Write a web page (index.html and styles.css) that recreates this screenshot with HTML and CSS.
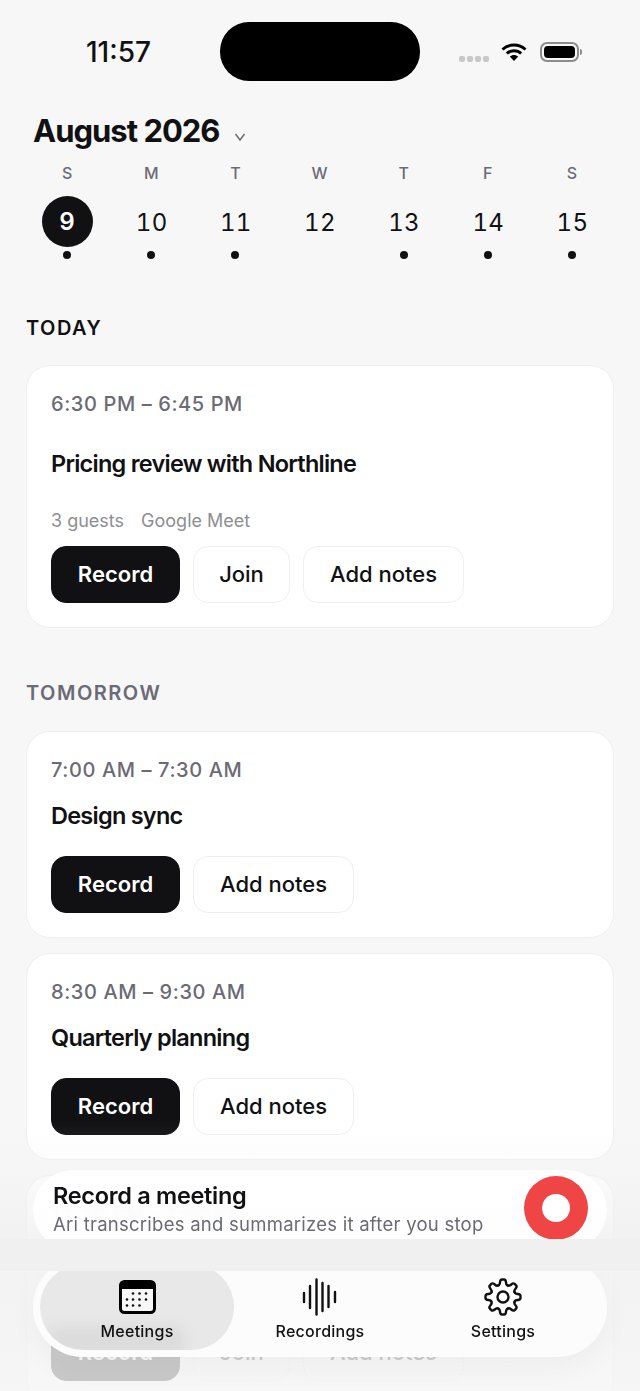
FILE: index.html
```html
<!DOCTYPE html>
<html>
<head>
    <meta charset="utf-8">
    <title>Meetings</title>
    <link rel="stylesheet" href="styles.css">
</head>
<body>
<div class="status">
    <div class="clock">11:57</div>
    <div class="island"></div>
    <div class="status-icons">
        <div class="signal"><span></span><span></span><span></span><span></span></div>
        <svg class="wifi" width="28" height="20" viewBox="0 0 28 20">
            <path d="M2.500 7.500C9 1.500 19 1.500 25.500 7.500" fill="none" stroke="#000" stroke-width="3"/>
            <path d="M6.800 11.500C11 7.700 17 7.700 21.200 11.500" fill="none" stroke="#000" stroke-width="3"/>
            <path d="M9.800 14.600L14 19L18.200 14.600C15.800 12.400 12.200 12.400 9.800 14.600Z" fill="#000"/>
        </svg>
        <div class="battery"><div class="battery-fill"></div></div>
        <div class="battery-tip"></div>
    </div>
</div>

<div class="month">
    <h1>August 2026</h1>
    <svg class="chevron" width="12" height="10" viewBox="0 0 12 10"><path d="M1.500 2L6 8L10.500 2" fill="none" stroke="#6b6b76" stroke-width="1.500"/></svg>
</div>

<div class="week">
    <div class="day"><span class="letter">S</span><span class="num selected">9</span><span class="dot"></span></div>
    <div class="day"><span class="letter">M</span><span class="num">10</span><span class="dot"></span></div>
    <div class="day"><span class="letter">T</span><span class="num">11</span><span class="dot"></span></div>
    <div class="day"><span class="letter">W</span><span class="num">12</span><span class="dot none"></span></div>
    <div class="day"><span class="letter">T</span><span class="num">13</span><span class="dot"></span></div>
    <div class="day"><span class="letter">F</span><span class="num">14</span><span class="dot"></span></div>
    <div class="day"><span class="letter">S</span><span class="num">15</span><span class="dot"></span></div>
</div>

<div class="section today">TODAY</div>
<div class="card first">
    <div class="time">6:30 PM – 6:45 PM</div>
    <div class="title spaced">Pricing review with Northline</div>
    <div class="meta"><span>3 guests</span><span>Google Meet</span></div>
    <div class="actions">
        <div class="btn primary">Record</div>
        <div class="btn join">Join</div>
        <div class="btn notes">Add notes</div>
    </div>
</div>

<div class="section tomorrow">TOMORROW</div>
<div class="card">
    <div class="time">7:00 AM – 7:30 AM</div>
    <div class="title">Design sync</div>
    <div class="actions tall">
        <div class="btn primary">Record</div>
        <div class="btn notes">Add notes</div>
    </div>
</div>
<div class="card">
    <div class="time">8:30 AM – 9:30 AM</div>
    <div class="title">Quarterly planning</div>
    <div class="actions tall">
        <div class="btn primary">Record</div>
        <div class="btn notes">Add notes</div>
    </div>
</div>
<div class="card last">
    <div class="time">12:30 PM – 1:00 PM</div>
    <div class="covered"></div>
    <div class="actions flush">
        <div class="btn primary">Record</div>
        <div class="btn join">Join</div>
        <div class="btn notes">Add notes</div>
    </div>
</div>

<div class="scrim"></div>
<div class="record-bar">
    <div class="record-text">
        <div class="record-title">Record a meeting</div>
        <div class="record-sub">Ari transcribes and summarizes it after you stop</div>
    </div>
    <div class="record-btn"><div class="record-hole"></div></div>
</div>
<div class="tabs">
    <div class="tab active">
        <div class="tab-icon">
            <svg width="37" height="34" viewBox="0 0 37 34">
                <rect x="1.500" y="1.500" width="34" height="31" rx="4" fill="#f7f7f7" stroke="#000" stroke-width="3"/>
                <path d="M1.500 5.500A4 4 0 0 1 5.500 1.500h26A4 4 0 0 1 35.500 5.500V8.500H1.500Z" fill="#000" stroke="#000"/>
                <g fill="#111">
                    <circle cx="14" cy="13.500" r="1.300"/><circle cx="20.500" cy="13.500" r="1.300"/><circle cx="27" cy="13.500" r="1.300"/>
                    <circle cx="8" cy="19.500" r="1.300"/><circle cx="14" cy="19.500" r="1.300"/><circle cx="20.500" cy="19.500" r="1.300"/><circle cx="27" cy="19.500" r="1.300"/>
                    <circle cx="8" cy="25.500" r="1.300"/><circle cx="14" cy="25.500" r="1.300"/><circle cx="20.500" cy="25.500" r="1.300"/>
                </g>
            </svg>
        </div>
        <span>Meetings</span>
    </div>
    <div class="tab">
        <div class="tab-icon">
            <svg width="36" height="38" viewBox="0 0 36 38" fill="none" stroke="#111" stroke-width="2.400" stroke-linecap="round">
                <path d="M2 15V24M8 8V30M14.500 1.500V36.500M20.500 5V33M26.500 8V29M33 14V24"/>
            </svg>
        </div>
        <span>Recordings</span>
    </div>
    <div class="tab">
        <div class="tab-icon">
            <svg width="40" height="40" viewBox="0 0 40 40" fill="none" stroke="#111" stroke-width="2.400" stroke-linecap="round">
                <defs>
                    <path id="cog" d="M15.200 8.450C16.600 8 16.900 7 17 5.300Q17.200 2.500 19 2.500H21Q22.800 2.500 23 5.300C23.100 7 23.400 8 24.800 8.450"/>
                </defs>
                <circle cx="20" cy="20" r="5.500"/>
                <use href="#cog"/>
                <use href="#cog" transform="rotate(45 20 20)"/>
                <use href="#cog" transform="rotate(90 20 20)"/>
                <use href="#cog" transform="rotate(135 20 20)"/>
                <use href="#cog" transform="rotate(180 20 20)"/>
                <use href="#cog" transform="rotate(225 20 20)"/>
                <use href="#cog" transform="rotate(270 20 20)"/>
                <use href="#cog" transform="rotate(315 20 20)"/>
            </svg>
        </div>
        <span>Settings</span>
    </div>
</div>
<div class="band"></div>
</body>
</html>
```

FILE: styles.css
```css
* { box-sizing: border-box; }
html, body { margin: 0; padding: 0; }
body {
    width: 640px;
    height: 1391px;
    position: relative;
    overflow: hidden;
    background: #f7f7f7;
    color: #111113;
    font-family: Inter, "Liberation Sans", sans-serif;
}

/* status bar */
.status { display: flex; align-items: center; height: 59px; margin-top: 22px; padding-left: 86px; }
.clock { width: 134px; font-size: 28px; font-weight: 500; color: #111; }
.island { width: 200px; height: 59px; border-radius: 29px; background: #000; }
.status-icons { display: flex; align-items: center; margin-left: 39px; }
.signal { display: flex; gap: 2px; margin-top: 14px; margin-right: 11px; }
.signal span { width: 6px; height: 6px; border-radius: 2px; background: #c8c8c8; }
.wifi { margin-right: 12px; }
.battery { width: 39px; height: 20px; border: 2px solid #8c8c8c; border-radius: 7px; padding: 2px; }
.battery-fill { height: 100%; border-radius: 4px; background: #000; }
.battery-tip { width: 2px; height: 6px; margin-left: 1px; border-radius: 0 2px 2px 0; background: #8c8c8c; }

/* month + week */
.month { display: flex; align-items: center; margin: 31px 0 0 33px; height: 36px; }
.month h1 { margin: 0; font-size: 31px; font-weight: 700; letter-spacing: -1px; color: #111113; }
.chevron { margin: 14px 0 0 15px; }
.week { display: flex; padding: 0 26px 0 25px; margin-top: 14px; }
.day { width: 84.2px; display: flex; flex-direction: column; align-items: center; }
.letter { height: 22px; line-height: 22px; font-size: 16px; font-weight: 500; color: #6b6b76; }
.num { width: 51px; height: 51px; margin-top: 12px; line-height: 53px; text-align: center; text-indent: 1px; border-radius: 50%; font-size: 24px; font-weight: 400; letter-spacing: 0.300px; font-variant-numeric: tabular-nums; color: #111113; }
.num.selected { background: #111113; color: #fff; font-weight: 600; line-height: 51px; text-indent: 0; }
.dot { width: 8px; height: 8px; margin-top: 4px; border-radius: 50%; background: #111113; }
.dot.none { background: none; }

/* agenda */
.section { margin-left: 26px; font-size: 20px; font-weight: 600; letter-spacing: 1.500px; line-height: 24px; }
.today { margin-top: 57px; color: #111113; }
.tomorrow { margin-top: 53px; color: #6b6b76; }
.card {
    margin: 15px 26px 0;
    height: 207px;
    padding: 25px 24px 0;
    background: #fff;
    border: 1px solid #efefef;
    border-radius: 24px;
}
.card.first { height: 263px; }
.card.last { height: 231px; }
.today + .card { margin-top: 25px; }
.tomorrow + .card { margin-top: 26px; }
.time { font-size: 20px; font-weight: 500; line-height: 26px; letter-spacing: 0.600px; color: #6b6b76; }
.title { margin-top: 19px; font-size: 23.500px; font-weight: 600; line-height: 28px; letter-spacing: -0.750px; color: #111113; }
.title.spaced { margin-top: 33px; }
.meta { display: flex; gap: 17px; margin-top: 31px; font-size: 18px; line-height: 24px; color: #8e8e93; }
.actions { display: flex; gap: 13px; margin-top: 13px; }
.actions.tall { margin-top: 26px; }
.actions.flush { margin-top: 0; }
.covered { height: 97px; }
.btn { height: 57px; line-height: 55px; text-align: center; border-radius: 15px; font-size: 22px; font-weight: 500; background: #fff; border: 1px solid #efefef; color: #111113; }
.btn.primary { width: 129px; background: #111113; border-color: #111113; color: #fff; font-weight: 600; }
.btn.join { width: 97px; }
.btn.notes { width: 161px; }

/* overlays */
.scrim {
    position: absolute;
    left: 0;
    top: 1120px;
    width: 640px;
    height: 271px;
    background: linear-gradient(to bottom, rgba(242,242,242,0) 0, rgba(242,242,242,0.04) 15px, rgba(242,242,242,0.3) 50px, rgba(241,241,241,0.85) 119px, rgba(245,245,245,0.8) 100%);
}
.record-bar {
    position: absolute;
    left: 33px;
    top: 1170px;
    width: 574px;
    height: 80px;
    display: flex;
    justify-content: space-between;
    padding: 12px 19px 0 20px;
    border-radius: 40px;
    background: rgba(255,255,255,0.9);
    backdrop-filter: blur(2px);
}
.record-title { font-size: 23.500px; font-weight: 600; line-height: 28px; letter-spacing: -0.300px; color: #111113; }
.record-sub { margin-top: 1px; font-size: 18.500px; line-height: 26px; letter-spacing: 0.250px; color: #6b6b76; }
.record-btn { width: 64px; height: 64px; margin-top: -6px; padding: 18px; border-radius: 50%; background: #f04545; flex-shrink: 0; }
.record-hole { width: 28px; height: 28px; border-radius: 50%; background: #fff; }
.tabs {
    position: absolute;
    left: 33px;
    top: 1257px;
    width: 574px;
    height: 100px;
    display: grid;
    grid-template-columns: 194px 172px 194px;
    padding: 7px;
    border-radius: 50px;
    background: #fcfcfc;
    box-shadow: 0 10px 30px rgba(0,0,0,0.04);
}
.band { position: absolute; left: 0; top: 1239px; width: 640px; height: 32px; background: #f0f0f0; }
.tab { position: relative; overflow: hidden; display: flex; flex-direction: column; align-items: center; gap: 5px; padding-top: 14px; font-size: 16px; line-height: 20px; font-weight: 500; letter-spacing: 0.250px; color: #111113; }
.tab.active { background: #e8e8e8; border-radius: 43px; }
.tab.active::before {
    content: "";
    position: absolute;
    left: 10px;
    right: 50px;
    top: 62px;
    bottom: -6px;
    background: rgba(0,0,0,0.05);
    filter: blur(7px);
}
.tab-icon { position: relative; height: 38px; display: flex; align-items: center; justify-content: center; }
.tab > span { position: relative; }
```
